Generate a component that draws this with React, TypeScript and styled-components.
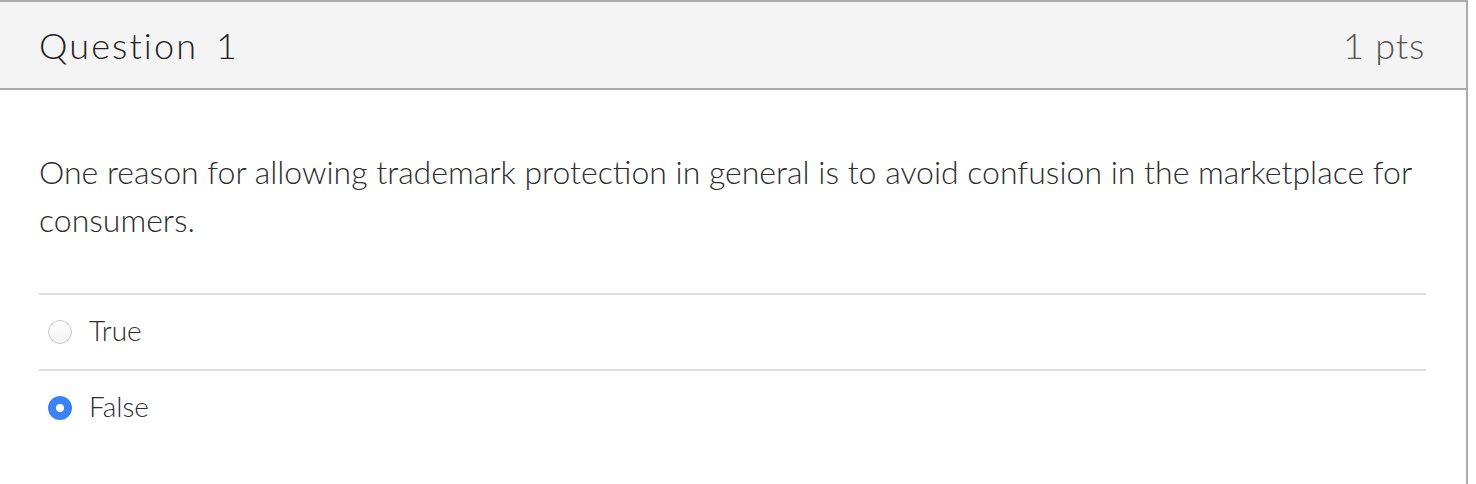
import React from "react";
import styled, { createGlobalStyle } from "styled-components";

const Global = createGlobalStyle`
  html, body { margin: 0; padding: 0; background: #fff; }
  body { font-family: Lato, "Open Sans", sans-serif; }
`;

const Card = styled.div`
  width: 1468px;
  height: 484px;
  box-sizing: border-box;
  border-top: 2px solid #acacac;
  border-right: 2px solid #acacac;
  background: #fff;
  display: flex;
  flex-direction: column;
`;

const Header = styled.div`
  height: 88px;
  box-sizing: border-box;
  background: #f4f4f4;
  border-bottom: 2px solid #acacac;
  display: flex;
  align-items: center;
  justify-content: space-between;
  padding: 0 41px 0 39px;
`;

const Title = styled.h2`
  margin: 0;
  font-size: 36px;
  font-weight: 300;
  color: #222;
  letter-spacing: 2.1px;
  word-spacing: 6px;
`;

const Points = styled.div`
  font-size: 36px;
  font-weight: 300;
  color: #555;
  letter-spacing: 0.8px;
`;

const Body = styled.div`
  padding: 0 40px 0 39px;
  display: flex;
  flex-direction: column;
`;

const Question = styled.p`
  margin: 0;
  padding: 58px 0 49px;
  font-size: 32px;
  font-weight: 300;
  line-height: 48px;
  color: #2d2d2d;
  border-bottom: 2px solid #dedede;
`;

const Answer = styled.label<{ $last?: boolean }>`
  display: flex;
  align-items: center;
  gap: 17px;
  height: 74px;
  padding-left: 9px;
  font-size: 28px;
  font-weight: 300;
  color: #2d2d2d;
  border-bottom: 2px solid ${(p) => (p.$last ? "transparent" : "#dedede")};
`;

const Label = styled.span`
  padding-bottom: 5px;
`;

const Radio = styled.span<{ $checked?: boolean }>`
  width: 24px;
  height: 24px;
  box-sizing: border-box;
  border-radius: 50%;
  flex: none;
  ${(p) =>
    p.$checked
      ? `background: #fff; border: 8px solid #3b82f6;`
      : `background: linear-gradient(#fff, #f2f2f2); border: 1px solid #c8c8c8;`}
`;

export default function App() {
  return (
    <>
      <Global />
      <Card>
        <Header>
          <Title>Question 1</Title>
          <Points>1 pts</Points>
        </Header>
        <Body>
          <Question>
            One reason for allowing trademark protection in general is to avoid confusion in the marketplace for
            consumers.
          </Question>
          <Answer>
            <Radio />
            <Label>True</Label>
          </Answer>
          <Answer $last>
            <Radio $checked />
            <Label>False</Label>
          </Answer>
        </Body>
      </Card>
    </>
  );
}
